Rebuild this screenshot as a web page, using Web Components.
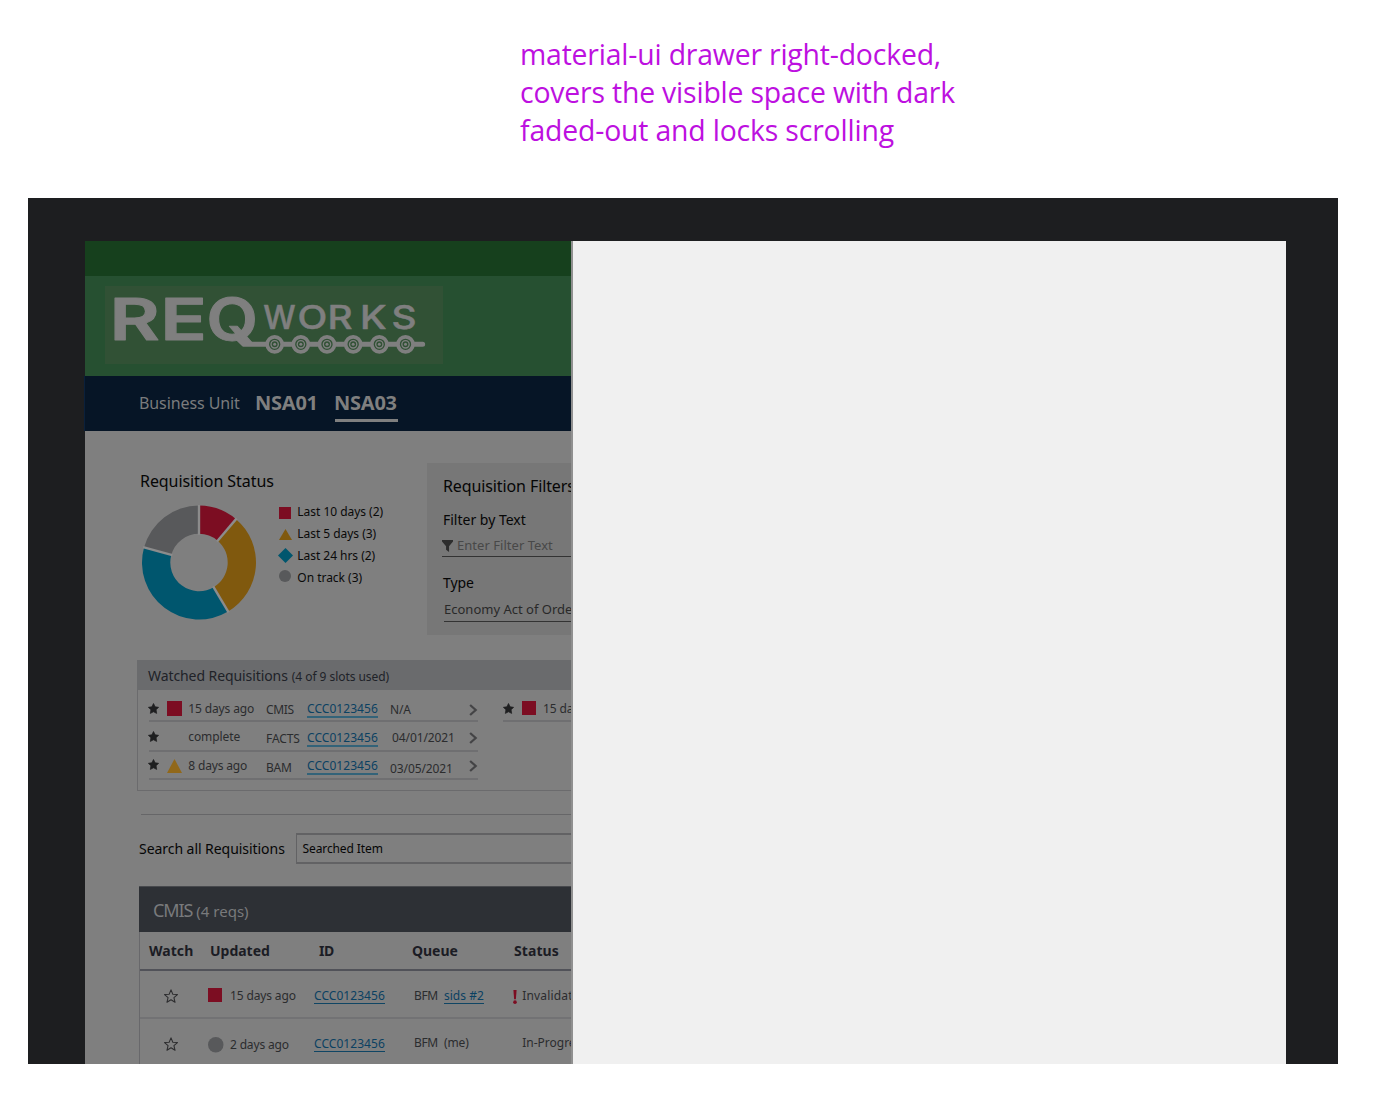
<!DOCTYPE html>
<html lang="en">
<head>
<meta charset="utf-8">
<title>Requisition drawer</title>
<style>
html,body{margin:0;background:#fff}
body{width:1382px;height:1098px;overflow:hidden;font-family:"Noto Sans",sans-serif}
</style>
</head>
<body>
<drawer-board></drawer-board>
<script>
const define = (name, html, after) => customElements.define(name, class extends HTMLElement {
  connectedCallback() {
    if (this.shadowRoot) return;
    this.attachShadow({mode: 'open'}).innerHTML = html(this);
    if (after) after(this);
  }
});

/* One line of text. s: size, w: width, b: baseline offset from the row top, l: left gap */
const fit = el => {
  const w = parseFloat(el.getAttribute('w'));
  const span = el.shadowRoot.querySelector('span');
  const n = el.textContent.length;
  if (!w || !n) return;
  span.style.letterSpacing = ((w - .2 - span.getBoundingClientRect().width) / n).toFixed(3) + 'px';
};
define('fit-text', el => {
  const a = k => el.getAttribute(k);
  const s = parseFloat(a('s') || 12);
  const top = parseFloat(a('b') || 15) - (10 + s * .388) + (s === 12 ? 1 : 0);
  return `<style>:host{display:block;flex:none;height:20px;line-height:20px;white-space:nowrap;
    font-size:${s}px;font-weight:${a('f') || 400};color:${a('c') || '#2b2c2e'};
    margin-top:${Math.round(top)}px;margin-left:${+(a('l') || 0) + 1}px}
    span{display:inline-block;line-height:20px}</style><span><slot></slot></span>`;
}, fit);

define('req-link', el => `<style>:host{display:block;flex:none;height:fit-content;width:71px;margin-top:${el.getAttribute('y')}px;
  border-bottom:${el.getAttribute('t') || 2}px solid ${el.getAttribute('u') || '#336379'}}
  :host([narrow]){width:40px}
  div{height:17px;margin-left:-1px;display:flow-root}</style><div><fit-text b="14" c="#0b4162" w="${el.hasAttribute('narrow') ? 40 : 71}">${el.textContent}</fit-text></div>`);

const shapes = {
  square: c => `<rect x="0" y="0" width="100" height="100" fill="${c || '#7c0d22'}"/>`,
  triangle: c => `<path d="M50 0L100 100H0Z" fill="${c || '#80590e'}"/>`,
  diamond: c => `<path d="M50 0L100 50L50 100L0 50Z" fill="${c || '#00566e'}"/>`,
  circle: c => `<circle cx="50" cy="50" r="50" fill="${c || '#58595b'}"/>`,
  star: () => `<path d="M50 4L65 34L97 39L74 62L79 95L50 80L21 95L26 62L3 39L35 34Z" fill="#1e1f20" stroke="#1e1f20" stroke-width="6" stroke-linejoin="round"/>`,
  outline: () => `<path d="M50 6L63 37L96 40L71 62L79 95L50 77L21 95L29 62L4 40L37 37Z" fill="none" stroke="#2c2c2e" stroke-width="7.5" stroke-linejoin="round"/>`,
  chevron: () => `<path d="M14 8L84 50L14 92" fill="none" stroke="#444446" stroke-width="2.2" vector-effect="non-scaling-stroke"/>`,
  funnel: () => `<path d="M0 0H100V12L64 52V100L37 82V52L0 12Z" fill="#2e2e2e"/>`,
  bang: () => `<path d="M10 0H90L72 66H28Z" fill="#7c0d22"/><ellipse cx="50" cy="87" rx="45" ry="13" fill="#7c0d22"/>`
};
define('req-icon', el => {
  const a = k => el.getAttribute(k);
  return `<style>:host{display:block;flex:none;width:${a('w')}px;height:${a('h') || a('w')}px;margin-top:${a('y') || 0}px;margin-left:${a('l') || 0}px}
  svg{display:block;width:100%;height:100%;overflow:visible}</style>
  <svg viewBox="0 0 100 100" preserveAspectRatio="none">${shapes[a('k')](a('c'))}</svg>`;
});

define('brand-logo', () => {
  let cars = '';
  for (let i = 0; i < 6; i++) {
    const x = 584 + i * 78.5;
    cars += `<circle cx="${x}" cy="329" r="22.5" fill="#315135" stroke="#7f7f7f" stroke-width="11"/>
      <circle cx="${x}" cy="329" r="11" fill="none" stroke="#7f7f7f" stroke-width="4"/><circle cx="${x}" cy="329" r="4.5" fill="#7f7f7f"/>`;
  }
  return `<style>:host{display:block;width:338px;height:78px;background:#315135}svg{display:block}
  text{fill:#7f7f7f;stroke:#7f7f7f;stroke-linejoin:round;font-family:Inter,sans-serif}</style>
  <svg width="338" height="78" viewBox="75 154 1014 234">
    <text transform="scale(1.33 1)" x="66.5 180.8" y="316" font-size="174" font-weight="600" stroke-width="3">RE</text>
    <text transform="scale(1.15 1)" x="330" y="316" font-size="174" font-weight="600" stroke-width="3">Q</text>
    <text x="550" y="284" font-size="97" font-weight="500" stroke-width="1.5">W</text>
    <text transform="scale(1.2 1)" x="544 619 700 779" y="284" font-size="97" font-weight="500" stroke-width="1.5">ORKS</text>
    <path d="M468 306L492 329H1028" fill="none" stroke="#7f7f7f" stroke-width="15" stroke-linecap="round" stroke-linejoin="round"/>${cars}
  </svg>`;
});

define('status-donut', () => {
  const cuts = [0, 40.5, 149.3, 285.3, 360], fills = ['#7c0d22', '#80590e', '#00566e', '#58595b'];
  const p = (deg, r) => { const t = deg * Math.PI / 180; return `${(58 + r * Math.sin(t)).toFixed(2)} ${(57.5 - r * Math.cos(t)).toFixed(2)}`; };
  let out = '';
  fills.forEach((c, i) => out += `<path fill="${c}" d="M${p(cuts[i], 57)}A57 57 0 0 1 ${p(cuts[i + 1], 57)}L${p(cuts[i + 1], 28.7)}A28.7 28.7 0 0 0 ${p(cuts[i], 28.7)}Z"/>`);
  cuts.slice(0, 4).forEach(d => out += `<path d="M${p(d, 27.7)}L${p(d, 58)}" stroke="#8c8c8c" stroke-width="2.4"/>`);
  return `<style>:host{display:block;width:116px;height:116px}svg{display:block}</style><svg width="116" height="116">${out}</svg>`;
});

define('unit-nav', () => `<style>:host{display:flex;box-sizing:border-box;height:55px;background:#061526;padding-left:54px;box-shadow:-1px 0 #0a203b}
  .on{width:63px;height:43px;border-bottom:3px solid #7f7f7f;margin-left:15px;flex:none}
  .u{width:117px}.n{width:64px;flex:none}.n,.on,.u{display:flow-root}.on{box-sizing:content-box}</style>
  <div class="u"><fit-text s="16" b="33" w="101" c="#7a7b7d" l="-1">Business Unit</fit-text></div>
  <div class="n"><fit-text s="20" b="35" w="63" f="700" c="#7f7f7f" l="-2">NSA01</fit-text></div>
  <div class="on"><fit-text s="20" b="35" w="63" f="700" c="#7f7f7f" l="-2">NSA03</fit-text></div>`);

define('status-summary', () => {
  const rows = [['square', 'Last 10 days (2)', 86, 12, 12, 5], ['triangle', 'Last 5 days (3)', 79, 13, 11, 5], ['diamond', 'Last 24 hrs (2)', 78, 15, 15, 1.5], ['circle', 'On track (3)', 65, 12, 12, 2]];
  return `<style>:host{display:block;width:342px;box-sizing:border-box;padding:40px 0 0 54px;height:229px}
  .c{display:flex;margin-top:14px}status-donut{margin-left:2px;flex:none}.l{margin-left:21px;margin-top:-3px}
  .r{display:flex;height:22px}.i{width:19px;display:flex;justify-content:flex-start}</style>
  <fit-text s="16" b="16" w="134" c="#060606">Requisition Status</fit-text>
  <div class="c"><status-donut></status-donut><div class="l">${rows.map(([k, t, w, iw, ih, y]) =>
    `<div class="r"><div class="i"><req-icon k="${k}" w="${iw}" h="${ih}" y="${y}" l="${k === 'diamond' ? 0 : 1}"></req-icon></div><fit-text b="14" l="-.7" w="${w}" c="#0a0a0a">${t}</fit-text></div>`).join('')}</div></div>`;
});

define('filter-panel', () => `<style>:host{display:block;flex:1;min-width:0;overflow:hidden;height:172px;margin-top:32px;background:#777;padding-left:15px;box-sizing:border-box}
  div{height:37px;display:flow-root}.b{height:35px}.f{display:flex;height:21px;border-bottom:1px solid #333}.t{height:28px;margin-top:4px}.e{height:32px;border-bottom:1px solid #333;margin-left:2px}</style>
  <div><fit-text s="16" b="29" w="132" c="#060606">Requisition Filters</fit-text></div>
  <div class="b"><fit-text s="14" b="25" w="83" c="#060606">Filter by Text</fit-text></div>
  <div class="f"><req-icon k="funnel" w="11" h="12" y="5"></req-icon><fit-text s="13" b="15" w="96" l="3" c="#484848">Enter Filter Text</fit-text></div>
  <div class="t"><fit-text s="14" b="27" w="31" c="#060606">Type</fit-text></div>
  <div class="e"><fit-text s="13" b="25" w="134" l="-1" c="#292929">Economy Act of Order</fit-text></div>`);

define('watched-panel', () => {
  const row = (cls, kind, when, ww, wb, sys, sw, sb, ly, date, dw, db, dl, cy) => `<div class="r ${cls}">
    <div class="s"><req-icon k="star" w="11" l=".4" y="${cy - 1}"></req-icon></div>
    <div class="k">${kind}</div><div class="w"><fit-text b="${wb}" l=".3" w="${ww}">${when}</fit-text></div>
    <div class="y"><fit-text b="${sb}" w="${sw}">${sys}</fit-text></div>
    <req-link y="${ly}">CCC0123456</req-link>
    <div class="d"><fit-text b="${db}" w="${dw}" l="${dl}">${date}</fit-text></div>
    <req-icon k="chevron" w="8" h="12" y="${cy}"></req-icon></div>`;
  return `<style>:host{display:block;margin-left:52px;height:131px}
  .h{display:flex;height:30px;background:#6a6b6d;padding-left:10px}
  .b{display:flex;box-sizing:border-box;height:101px;border:solid #6b6b6d;border-width:0 0 1px 1px;padding:2px 0 0 11px}
  .g{width:329px;flex:none}.g2{width:68px;margin-left:25px;flex:none}
  .r{display:flex;box-sizing:border-box;height:30px;border-bottom:2px solid #6f6f71}.r.a{height:30px}.r.c{height:28px}
  .s{width:18px;flex:none;margin-left:-1px}.k{width:21px;flex:none}.w{width:78px;flex:none}.y{width:42px;flex:none}.d{width:91px;flex:none}</style>
  <div class="h"><fit-text s="14" b="21" w="140" c="#202228">Watched Requisitions</fit-text><fit-text b="21" w="97.5" l="3" c="#202228">(4 of 9 slots used)</fit-text></div>
  <div class="b"><div class="g">
    ${row('a', '<req-icon k="square" w="15" y="9" l="1"></req-icon>', '15 days ago', 66, 21, 'CMIS', 28, 22, 7, 'N/A', 21, 22, 11, 12)}
    ${row('', '', 'complete', 52, 19, 'FACTS', 34, 21, 6, '04/01/2021', 63, 20, 13, 10)}
    ${row('c', '<req-icon k="triangle" w="15" h="14" y="7" l=".5" c="#91681a"></req-icon>', '8 days ago', 59, 18, 'BAM', 26, 20, 4, '03/05/2021', 63, 21, 11, 8)}
  </div><div class="g2"><div class="r a"><div class="s"><req-icon k="star" w="11" l=".5" y="11"></req-icon></div><div class="k"><req-icon k="square" w="14" y="9" l="2"></req-icon></div><fit-text b="21" l="1" w="66">15 days ago</fit-text></div></div></div>`;
});

define('search-bar', () => `<style>:host{display:flex;height:72px;margin:23px 0 0 54px;box-sizing:border-box;flex-wrap:wrap;align-content:flex-start}
  hr{height:1px;border:0;margin:0 0 0 2px;background:#666668;flex:none;width:430px}
  .t{width:157px;flex:none}.i{box-sizing:border-box;width:275px;height:31px;border:solid #626264;border-width:2px 0 2px 1px;margin-top:18px;padding-left:5px}</style>
  <hr><div class="t"><fit-text s="14" b="39" w="146" l="-1" c="#060606">Search all Requisitions</fit-text></div>
  <div class="i"><fit-text b="18" w="80.5" l="-.5" c="#060606">Searched Item</fit-text></div>`);

define('req-table', () => {
  const head = [['Watch', 44.5, 0, 61], ['Updated', 60, 1, 109], ['ID', 15, 1, 93], ['Queue', 46, 1, 102], ['Status', 45, 1, 60]];
  return `<style>:host{display:block;margin-left:54px;height:178px;overflow:hidden}
  .h{display:flex;height:46px;box-sizing:border-box;background:#2d3035;border-top:1px solid #47494d;padding-left:13px}
  .b{border-left:1px solid #68686b}
  .n{display:flex;height:37px;border-bottom:2px solid #515259;padding-left:0}
  .n div{flex:none}.r{display:flex;height:46px;border-bottom:2px solid #727274}.r.z{height:46px;border:0}
  .s{width:68px;flex:none}.k{width:21px;flex:none}.w{width:85px;flex:none}.l{width:99px;flex:none}.q{width:31px;flex:none}.p{width:68px;flex:none}.x{width:10px;flex:none}</style>
  <div class="h"><fit-text s="18" b="30" w="39.5" c="#797a7c">CMIS</fit-text><fit-text s="15" b="30" w="52.5" l="3" c="#797a7c">(4 reqs)</fit-text></div>
  <div class="b"><div class="n">${head.map(([t, w, l, c], i) => `<div style="width:${c + (i ? 0 : 8)}px"><fit-text s="14" b="24" f="700" w="${w}" l="${i ? l - 1 : 8}" c="#1b1c24">${t}</fit-text></div>`).join('')}</div>
  <div class="r"><div class="s"><req-icon k="outline" w="14" y="18" l="24"></req-icon></div><div class="k"><req-icon k="square" w="14" y="17"></req-icon></div>
    <div class="w"><fit-text b="29" w="66">15 days ago</fit-text></div><div class="l"><req-link y="15" t="1" u="#0f4564">CCC0123456</req-link></div>
    <div class="q"><fit-text b="29" w="24">BFM</fit-text></div><div class="p"><req-link narrow y="15" t="1" u="#0f4564">sids #2</req-link></div>
    <div class="x"><req-icon k="bang" w="4" h="14" y="18.5" l=".5"></req-icon></div><fit-text b="29" w="65" l="-.7">Invalidated</fit-text></div>
  <div class="r z"><div class="s"><req-icon k="outline" w="14" y="18" l="24"></req-icon></div><div class="k"><req-icon k="circle" w="15.5" y="18"></req-icon></div>
    <div class="w"><fit-text b="30" w="59">2 days ago</fit-text></div><div class="l"><req-link y="15" t="1" u="#0f4564">CCC0123456</req-link></div>
    <div class="q"><fit-text b="28" w="24">BFM</fit-text></div><div class="p"><fit-text b="28" w="25" l="-1">(me)</fit-text></div>
    <div class="x"></div><fit-text b="28" w="65" l="-.7">In-Progress</fit-text></div></div>`;
});

define('req-page', () => `<style>:host{display:block;width:486px;height:823px;background:#7f7f7f;flex:none;clip-path:inset(0 0 0 -1px)}
  .t{height:35px;background:#16401d}.h{height:100px;box-sizing:border-box;padding:10px 0 0 20px;background:#265031}.m{display:flex}</style>
  <div class="t"></div><div class="h"><brand-logo></brand-logo></div><unit-nav></unit-nav>
  <div class="m"><status-summary></status-summary><filter-panel></filter-panel></div>
  <watched-panel></watched-panel><search-bar></search-bar><req-table></req-table>`);

define('side-drawer', () => `<style>:host{display:block;flex:1;background:#f0f0f0;border-left:2px solid #909090}</style><slot></slot>`);

define('board-note', () => `<style>:host{display:block;height:163px;padding:35px 0 0 520px;font:28.4px/38px "Open Sans",sans-serif;color:#bd10e0}
  div{white-space:nowrap;height:38px}span{display:inline-block}</style>
  <div><span data-w="421">material-ui drawer right-docked,</span></div><div><span data-w="435">covers the visible space with dark</span></div><div><span data-w="374">faded-out and locks scrolling</span></div>`,
  el => el.shadowRoot.querySelectorAll('span').forEach(s => {
    s.style.letterSpacing = ((+s.dataset.w - s.getBoundingClientRect().width) / s.textContent.length).toFixed(3) + 'px';
  }));

define('drawer-board', () => `<style>:host{display:block}.f{display:flex;box-sizing:border-box;width:1310px;height:866px;margin-left:28px;padding:43px 52px 0 57px;background:#1d1e20}</style>
  <board-note></board-note><div class="f"><req-page></req-page><side-drawer></side-drawer></div>`);
</script>
</body>
</html>
